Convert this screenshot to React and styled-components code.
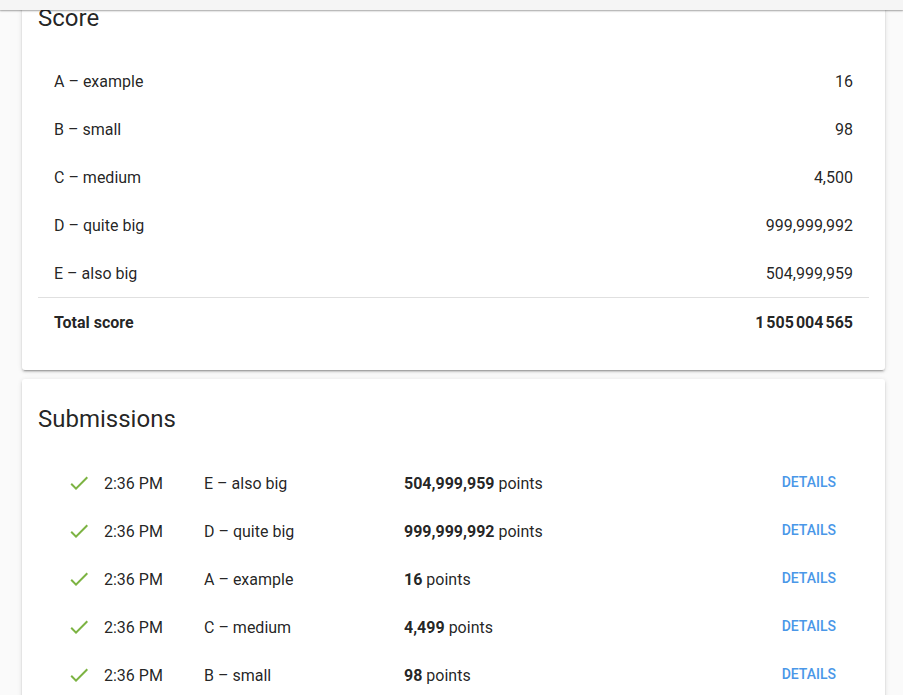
import React from 'react';
import styled, { createGlobalStyle } from 'styled-components';

const GlobalStyle = createGlobalStyle`
  * {
    box-sizing: border-box;
  }
  html,
  body {
    margin: 0;
    padding: 0;
    background: #fafafa;
    font-family: Roboto, 'Liberation Sans', sans-serif;
    color: rgba(0, 0, 0, 0.87);
    overflow: hidden;
  }
`;

const scores = [
  { name: 'A – example', value: '16' },
  { name: 'B – small', value: '98' },
  { name: 'C – medium', value: '4,500' },
  { name: 'D – quite big', value: '999,999,992' },
  { name: 'E – also big', value: '504,999,959' },
];

const submissions = [
  { time: '2:36 PM', problem: 'E – also big', points: '504,999,959' },
  { time: '2:36 PM', problem: 'D – quite big', points: '999,999,992' },
  { time: '2:36 PM', problem: 'A – example', points: '16' },
  { time: '2:36 PM', problem: 'C – medium', points: '4,499' },
  { time: '2:36 PM', problem: 'B – small', points: '98' },
];

const CheckIcon = () => (
  <svg width="24" height="24" viewBox="0 0 24 24">
    <path
      fill="#7cb342"
      d="M21,7L9,19L3.5,13.5L4.91,12.09L9,16.17L19.59,5.59L21,7Z"
    />
  </svg>
);

const App = () => {
  return (
    <>
      <GlobalStyle />
      <AppBar />
      <Page>
        <Card $first>
          <Title>Score</Title>
          <ScoreTable>
            {scores.map((s) => (
              <ScoreRow key={s.name}>
                <span>{s.name}</span>
                <span>{s.value}</span>
              </ScoreRow>
            ))}
            <ScoreRow $total>
              <span>Total score</span>
              <span>1{'\u202f'}505{'\u202f'}004{'\u202f'}565</span>
            </ScoreRow>
          </ScoreTable>
        </Card>
        <Card>
          <Title>Submissions</Title>
          <SubmissionList>
            {submissions.map((s) => (
              <SubmissionRow key={s.problem}>
                <IconCell>
                  <CheckIcon />
                </IconCell>
                <TimeCell>{s.time}</TimeCell>
                <ProblemCell>{s.problem}</ProblemCell>
                <PointsCell>
                  <b>{s.points}</b> points
                </PointsCell>
                <DetailsButton>Details</DetailsButton>
              </SubmissionRow>
            ))}
          </SubmissionList>
        </Card>
      </Page>
    </>
  );
};

const AppBar = styled.header`
  position: fixed;
  top: 0;
  left: 0;
  right: 0;
  height: 10px;
  background: #f5f5f5;
  box-shadow: 0 1px 2px rgba(0, 0, 0, 0.25), 0 1px 1px rgba(0, 0, 0, 0.12);
  z-index: 10;
`;

const Page = styled.main`
  display: flex;
  flex-direction: column;
  gap: 9px;
  width: 863px;
  margin-left: 22px;
  margin-top: -22px;
`;

const Card = styled.section`
  background: #fff;
  border-radius: 3px;
  box-shadow: 0 3px 1px -2px rgba(0, 0, 0, 0.2), 0 2px 2px 0 rgba(0, 0, 0, 0.14),
    0 1px 5px 0 rgba(0, 0, 0, 0.12);
  padding: 24px 16px ${(p) => (p.$first ? '24px' : '40px')};
`;

const Title = styled.h2`
  margin: 0 0 24px;
  font-size: 24px;
  line-height: 32px;
  font-weight: 400;
  letter-spacing: 0;
`;

const ScoreTable = styled.div`
  display: flex;
  flex-direction: column;
  margin-top: -1px;
`;

const ScoreRow = styled.div`
  display: flex;
  justify-content: space-between;
  align-items: center;
  height: 48px;
  padding: ${(p) => (p.$total ? '1px 16px 0' : '0 16px')};
  font-size: 16px;
  font-weight: ${(p) => (p.$total ? 700 : 400)};
  border-top: ${(p) => (p.$total ? '1px solid #e0e0e0' : 'none')};
  margin-bottom: ${(p) => (p.$total ? '1px' : '0')};
`;

const SubmissionList = styled.div`
  display: flex;
  flex-direction: column;
`;

const SubmissionRow = styled.div`
  display: flex;
  align-items: center;
  height: 48px;
  padding: 0 33px 0 29px;
  font-size: 16px;
`;

const IconCell = styled.span`
  display: flex;
  width: 24px;
  height: 24px;
  margin-right: 13px;
`;

const TimeCell = styled.span`
  width: 100px;
`;

const ProblemCell = styled.span`
  width: 200px;
`;

const PointsCell = styled.span`
  flex: 1;
  b {
    font-weight: 700;
  }
`;

const DetailsButton = styled.button`
  border: none;
  background: transparent;
  padding: 0;
  font-family: inherit;
  font-size: 14px;
  font-weight: 500;
  text-transform: uppercase;
  color: #4a97e8;
  cursor: pointer;
  margin-top: -2px;
`;

export default App;
